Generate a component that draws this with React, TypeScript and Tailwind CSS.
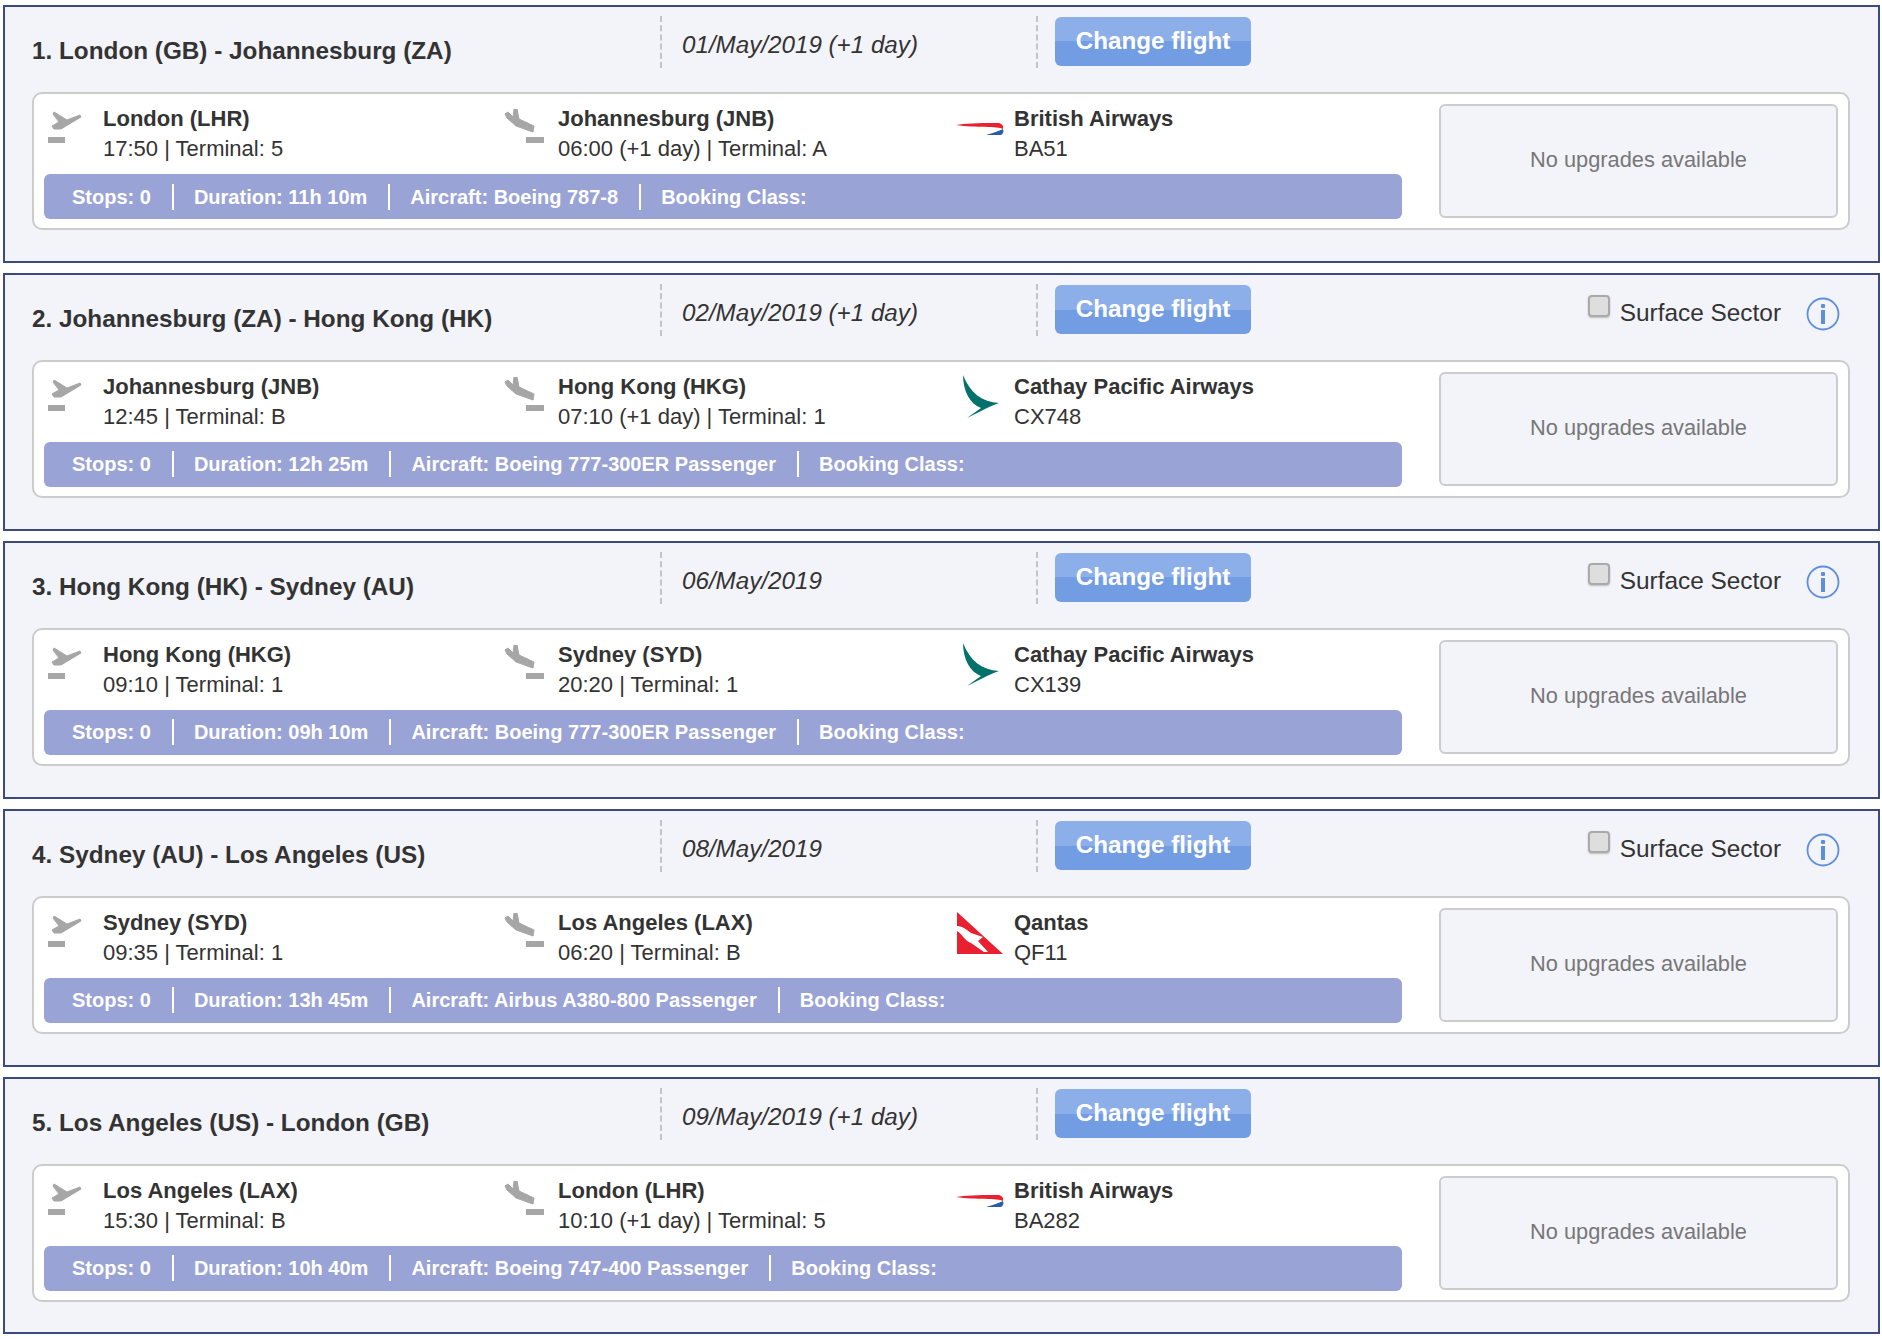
type Airline = "ba" | "cx" | "qf"

const legs = [
  {
    title: "1. London (GB) - Johannesburg (ZA)",
    date: "01/May/2019 (+1 day)",
    surface: false,
    from: "London (LHR)",
    fromInfo: "17:50 | Terminal: 5",
    to: "Johannesburg (JNB)",
    toInfo: "06:00 (+1 day) | Terminal: A",
    airline: "British Airways",
    logo: "ba" as Airline,
    flight: "BA51",
    duration: "11h 10m",
    aircraft: "Boeing 787-8",
  },
  {
    title: "2. Johannesburg (ZA) - Hong Kong (HK)",
    date: "02/May/2019 (+1 day)",
    surface: true,
    from: "Johannesburg (JNB)",
    fromInfo: "12:45 | Terminal: B",
    to: "Hong Kong (HKG)",
    toInfo: "07:10 (+1 day) | Terminal: 1",
    airline: "Cathay Pacific Airways",
    logo: "cx" as Airline,
    flight: "CX748",
    duration: "12h 25m",
    aircraft: "Boeing 777-300ER Passenger",
  },
  {
    title: "3. Hong Kong (HK) - Sydney (AU)",
    date: "06/May/2019",
    surface: true,
    from: "Hong Kong (HKG)",
    fromInfo: "09:10 | Terminal: 1",
    to: "Sydney (SYD)",
    toInfo: "20:20 | Terminal: 1",
    airline: "Cathay Pacific Airways",
    logo: "cx" as Airline,
    flight: "CX139",
    duration: "09h 10m",
    aircraft: "Boeing 777-300ER Passenger",
  },
  {
    title: "4. Sydney (AU) - Los Angeles (US)",
    date: "08/May/2019",
    surface: true,
    from: "Sydney (SYD)",
    fromInfo: "09:35 | Terminal: 1",
    to: "Los Angeles (LAX)",
    toInfo: "06:20 | Terminal: B",
    airline: "Qantas",
    logo: "qf" as Airline,
    flight: "QF11",
    duration: "13h 45m",
    aircraft: "Airbus A380-800 Passenger",
  },
  {
    title: "5. Los Angeles (US) - London (GB)",
    date: "09/May/2019 (+1 day)",
    surface: false,
    from: "Los Angeles (LAX)",
    fromInfo: "15:30 | Terminal: B",
    to: "London (LHR)",
    toInfo: "10:10 (+1 day) | Terminal: 5",
    airline: "British Airways",
    logo: "ba" as Airline,
    flight: "BA282",
    duration: "10h 40m",
    aircraft: "Boeing 747-400 Passenger",
  },
]

function TakeoffIcon() {
  return (
    <svg width="36" height="36" viewBox="0 0 36 36" className="mt-[5px] shrink-0 blur-[0.6px]">
      <rect x="1" y="28" width="17" height="6" fill="#a6a6a6" />
      <path d="M7 3 L20 11 L33 6 L34 8 L14 20 L7 20 L5 17 L12 13 L6 5 Z" fill="#a6a6a6" stroke="#a6a6a6" strokeWidth="1" />
    </svg>
  )
}

function LandingIcon() {
  return (
    <svg width="42" height="36" viewBox="0 0 42 36" className="mt-[5px] shrink-0 blur-[0.6px]">
      <rect x="24" y="28" width="18" height="6" fill="#a6a6a6" />
      <path d="M12 0 L15 0 L17 10 L32 17 L31 23 L14 17 L5 9 L3 5 L6 3 L11 8 Z" fill="#a6a6a6" stroke="#a6a6a6" strokeWidth="1" />
    </svg>
  )
}

function AirlineLogo({ name }: { name: Airline }) {
  if (name === "ba") {
    return (
      <svg width="48" height="18" viewBox="0 0 48 18" className="mb-[10px]">
        <path d="M0 5 C14 3 30 3 43 3 C46 4 48 6 47 9 C42 6 20 8 0 5 Z" fill="#e8202f" />
        <path d="M30 15 C37 13 43 11 47 9 C48 12 47 14 45 15 Z" fill="#2a5caa" />
      </svg>
    )
  }
  if (name === "cx") {
    return (
      <svg width="40" height="46" viewBox="0 0 40 46" className="mb-[8px] ml-[6px]">
        <path d="M1 0 C8 18 20 27 37 28 C32 30 29 31 25 33 L5 43 L19 33 C8 29 1 16 1 0 Z" fill="#00716b" />
      </svg>
    )
  }
  return (
    <svg width="46" height="42" viewBox="0 0 46 42" className="mb-[10px] ml-[1px]">
      <path d="M0 0 L46 42 L0 42 Z" fill="#e8202f" />
      <path d="M0 14 C6 14 10 18 14 21 L26 25 L21 29 L31 40 L27 40 L14 31 C8 29 5 22 0 19 Z" fill="#ffffff" />
    </svg>
  )
}

function InfoIcon() {
  return (
    <svg width="34" height="34" viewBox="0 0 34 34" className="ml-[25px] mr-[10px] mt-[13px] shrink-0">
      <circle cx="17" cy="17" r="15.5" fill="none" stroke="#5e8ee0" strokeWidth="1.8" />
      <rect x="15" y="7" width="4" height="4" rx="1" fill="#5e8ee0" />
      <rect x="15" y="13" width="4" height="14" fill="#5e8ee0" />
    </svg>
  )
}

function Endpoint({ name, info }: { name: string; info: string }) {
  return (
    <div className="text-[22px] leading-[30px] text-[#333333]">
      <div className="font-bold">{name}</div>
      <div>{info}</div>
    </div>
  )
}

function Leg({ leg }: { leg: (typeof legs)[number] }) {
  return (
    <section className="h-[257.9px] border-2 border-[#3d4a7f] bg-[#f3f3fa] pl-[27px] pr-[28px] pt-[9px]">
      <div className="flex h-[68px] items-start">
        <h2 className="mt-[20px] w-[628px] text-[24.3px] font-bold leading-[30px] text-[#333333]">{leg.title}</h2>
        <div className="h-[52px] w-[376px] border-l-2 border-dashed border-[#c4c4c4] pl-[20px] pt-[14px] text-[24.2px] italic leading-[30px] text-[#333333]">
          {leg.date}
        </div>
        <div className="mr-[17px] h-[52px] border-l-2 border-dashed border-[#c4c4c4]" />
        <button className="mt-[1px] h-[49px] w-[196px] rounded-[6px] bg-[linear-gradient(#8dafe9_50%,#739de3_50%)] text-center text-[24.2px] font-bold text-white">
          Change flight
        </button>
        {leg.surface && (
          <div className="ml-auto flex items-start">
            <span className="mt-[11px] h-[22px] w-[22px] rounded-[4px] border-2 border-[#aaaaaa] bg-[#dedede] shadow-[0_1px_2px_#bbbbbb]" />
            <span className="ml-[10px] mt-[14px] text-[24.4px] leading-[30px] text-[#333333]">Surface Sector</span>
            <InfoIcon />
          </div>
        )}
      </div>
      <div className="mt-[8px] flex h-[138px] rounded-[10px] border-2 border-[#cccccc] bg-white pl-[10px] pr-[10px]">
        <div className="w-[1358px] shrink-0">
          <div className="flex h-[80px] items-start pt-[10px]">
            <div className="flex w-[458px] gap-[20px] pl-[3px]">
              <TakeoffIcon />
              <Endpoint name={leg.from} info={leg.fromInfo} />
            </div>
            <div className="flex w-[454px] gap-[14px]">
              <LandingIcon />
              <Endpoint name={leg.to} info={leg.toInfo} />
            </div>
            <div className="flex items-center">
              <div className="flex h-[60px] w-[58px] items-center">
                <AirlineLogo name={leg.logo} />
              </div>
              <Endpoint name={leg.airline} info={leg.flight} />
            </div>
          </div>
          <div className="flex h-[45px] items-center rounded-[6px] bg-[#9aa3d6] text-[20px] font-bold leading-[26px] text-white">
            <span className="border-r-2 border-white pl-[28px] pr-[21px]">Stops: 0</span>
            <span className="border-r-2 border-white pl-[20px] pr-[21px]">Duration: {leg.duration}</span>
            <span className="border-r-2 border-white pl-[20px] pr-[21px]">Aircraft: {leg.aircraft}</span>
            <span className="pl-[20px]">Booking Class:</span>
          </div>
        </div>
        <div className="ml-[37px] mt-[10px] flex h-[114px] flex-1 items-center justify-center rounded-[6px] border-2 border-[#cccccc] bg-[#f3f3fa] pb-[1px] text-[21.8px] text-[#777777]">
          No upgrades available
        </div>
      </div>
    </section>
  )
}

export default function App() {
  return (
    <main className="flex min-h-[1339px] flex-col gap-[10px] bg-white pb-[2px] pl-[3px] pr-[2px] pt-[5px] font-['Liberation_Sans',Arial,sans-serif]">
      {legs.map((leg) => (
        <Leg key={leg.title} leg={leg} />
      ))}
    </main>
  )
}
